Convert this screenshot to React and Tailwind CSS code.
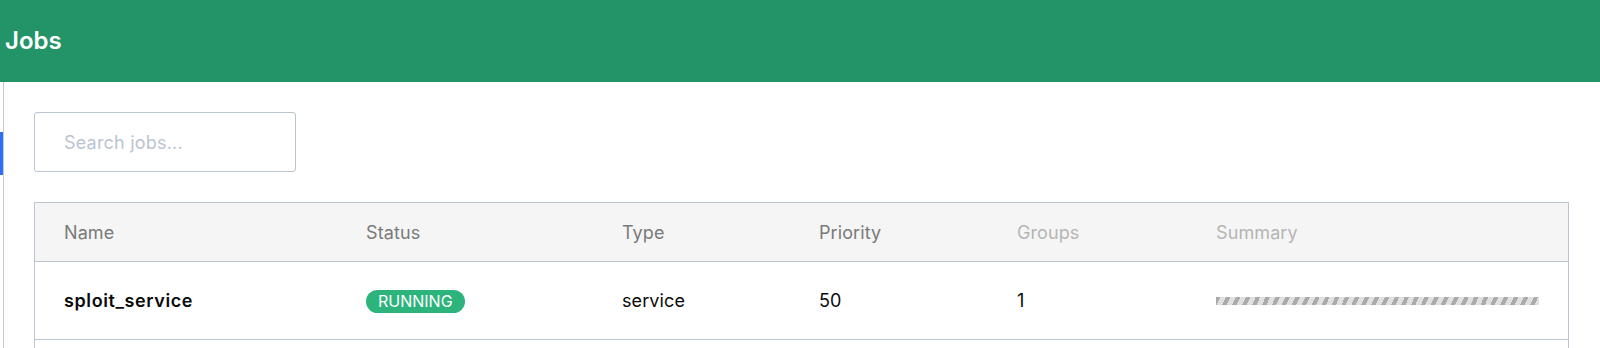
import React from "react";

const cols = "grid grid-cols-[302px_256px_197px_198px_199px_1fr]";

export default function App() {
  return (
    <div className="min-h-[348px] bg-white font-['Inter',sans-serif]">
      <header className="flex h-[82px] items-center bg-[#239368] pl-[5px]">
        <h1 className="text-[24px] font-semibold leading-none text-white">Jobs</h1>
      </header>
      <div className="flex">
        <div className="w-[4px] shrink-0 border-r border-[#c4c9d2]">
          <div className="mt-[50px] h-[43px] w-[3px] bg-[#2e6ff7]" />
        </div>
        <main className="flex-1 pl-[30px] pr-[31px] pt-[30px]">
          <input
            type="text"
            placeholder="Search jobs..."
            className="box-border block h-[60px] w-[262px] rounded-[3px] border border-[#bbc4d1] px-[29px] text-[18px] tracking-[0.2px] text-[#363636] outline-none placeholder:text-[#bbc4d1]"
          />
          <div className="mt-[30px] border border-[#bbc4d1] text-[18px] tracking-[0.1px]">
            <div className={`${cols} h-[59px] items-center border-b border-[#bbc4d1] bg-[#f5f5f5]`}>
              <div className="px-[29px] text-[#7a7a7a]">Name</div>
              <div className="px-[29px] text-[#7a7a7a]">Status</div>
              <div className="px-[29px] text-[#7a7a7a]">Type</div>
              <div className="px-[29px] text-[#7a7a7a]">Priority</div>
              <div className="px-[29px] text-[#b5b5b5]">Groups</div>
              <div className="px-[29px] text-[#b5b5b5]">Summary</div>
            </div>
            <div className={`${cols} h-[78px] items-center border-b border-[#bbc4d1] text-[#0a0a0a]`}>
              <div className="px-[29px] font-semibold tracking-[0.6px]">sploit_service</div>
              <div className="px-[29px]">
                <span className="inline-flex h-[23px] items-center rounded-full bg-[#2db47c] px-[12px] text-[16px] leading-none tracking-normal text-white">
                  RUNNING
                </span>
              </div>
              <div className="px-[29px]">service</div>
              <div className="px-[29px]">50</div>
              <div className="px-[29px]">1</div>
              <div className="px-[29px]">
                <div className="h-[8px] w-full bg-[repeating-linear-gradient(115deg,#aaaaaa_0px,#aaaaaa_4px,#e0e0e0_4px,#e0e0e0_9px)]" />
              </div>
            </div>
            <div className="h-[76px]" />
          </div>
        </main>
      </div>
    </div>
  );
}
